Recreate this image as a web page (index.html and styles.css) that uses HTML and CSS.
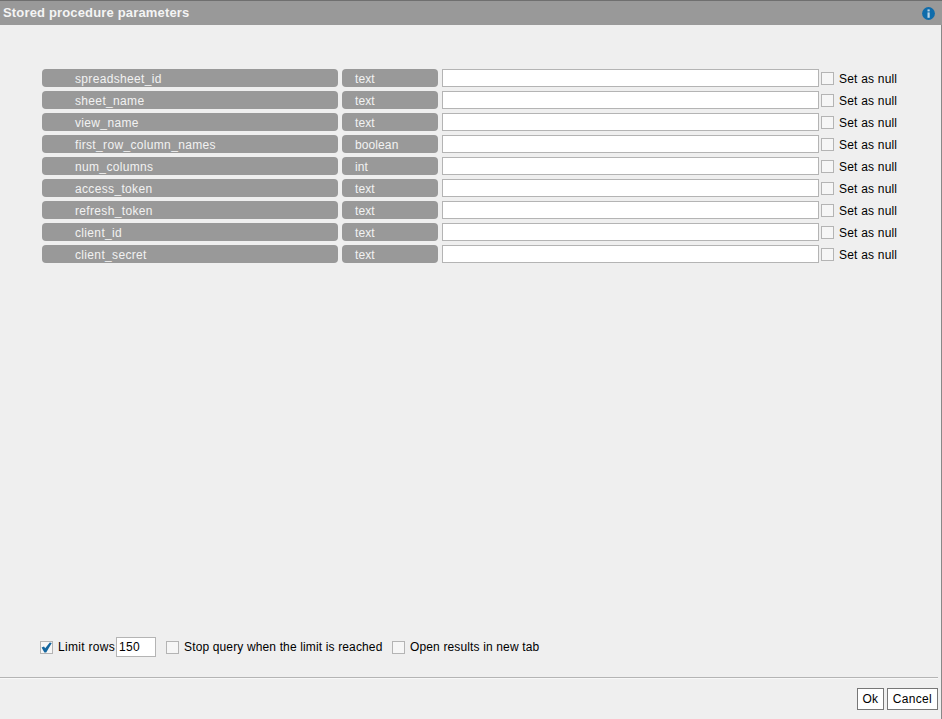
FILE: index.html
```html
<!DOCTYPE html>
<html lang="en">
<head>
<meta charset="utf-8">
<title>Stored procedure parameters</title>
<link rel="stylesheet" href="styles.css">
</head>
<body>
<div class="dialog">
  <div class="titlebar">
    <span class="title">Stored procedure parameters</span>
    <svg class="info" width="13" height="13" viewBox="0 0 13 13"><circle cx="6.5" cy="6.5" r="6.4" fill="#0f6cab"/><rect x="5.5" y="5.4" width="2.2" height="5.4" fill="#b9d5e8"/><rect x="5.5" y="2.4" width="2.2" height="2" fill="#b9d5e8"/></svg>
  </div>
  <div class="params">
    <div class="row"><div class="pill name">spreadsheet_id</div><div class="pill type">text</div><input class="value" type="text"><span class="box"></span><span class="null">Set as null</span></div>
    <div class="row"><div class="pill name">sheet_name</div><div class="pill type">text</div><input class="value" type="text"><span class="box"></span><span class="null">Set as null</span></div>
    <div class="row"><div class="pill name">view_name</div><div class="pill type">text</div><input class="value" type="text"><span class="box"></span><span class="null">Set as null</span></div>
    <div class="row"><div class="pill name">first_row_column_names</div><div class="pill type">boolean</div><input class="value" type="text"><span class="box"></span><span class="null">Set as null</span></div>
    <div class="row"><div class="pill name">num_columns</div><div class="pill type">int</div><input class="value" type="text"><span class="box"></span><span class="null">Set as null</span></div>
    <div class="row"><div class="pill name">access_token</div><div class="pill type">text</div><input class="value" type="text"><span class="box"></span><span class="null">Set as null</span></div>
    <div class="row"><div class="pill name">refresh_token</div><div class="pill type">text</div><input class="value" type="text"><span class="box"></span><span class="null">Set as null</span></div>
    <div class="row"><div class="pill name">client_id</div><div class="pill type">text</div><input class="value" type="text"><span class="box"></span><span class="null">Set as null</span></div>
    <div class="row"><div class="pill name">client_secret</div><div class="pill type">text</div><input class="value" type="text"><span class="box"></span><span class="null">Set as null</span></div>
  </div>
  <div class="options">
    <span class="box checked"><svg width="11" height="11" viewBox="0 0 11 11"><path d="M.6 5.6 L3 4.6 L4.2 6.2 L8.8 .4 L10.8 1 L5.2 10.4 L3.4 10.4 Z" fill="#14669f"/></svg></span>
    <span class="opt limit">Limit rows</span>
    <input class="limit-input" type="text" value="150">
    <span class="box stop"></span>
    <span class="opt">Stop query when the limit is reached</span>
    <span class="box open"></span>
    <span class="opt">Open results in new tab</span>
  </div>
  <div class="footer">
    <button class="btn btn-ok" type="button">Ok</button>
    <button class="btn" type="button">Cancel</button>
  </div>
</div>
</body>
</html>
```
FILE: styles.css
```css
* { box-sizing: border-box; }
html, body { margin: 0; padding: 0; }
body { font-family: "Liberation Sans", Arial, sans-serif; font-size: 12px; color: #000; background: #efefef; }
.dialog {
  width: 942px; height: 719px; display: flex; flex-direction: column;
  background: #efefef; border-right: 1px solid #888;
}
.titlebar {
  height: 25px; flex: none; margin-right: -1px; background: #999; border-top: 1px solid #6f6f6f;
  display: flex; align-items: center; justify-content: space-between; padding: 0 7px 0 3px;
}
.title { color: #f4f4f4; font-weight: bold; font-size: 13px; letter-spacing: .16px; padding-bottom: 2px; }
.params { padding: 44px 0 0 42px; flex: 1; display: flex; flex-direction: column; gap: 4px; }
.row { display: flex; align-items: center; height: 18px; }
.pill {
  height: 18px; line-height: 20px; background: #999; color: #f2f2f2; border-radius: 4px;
  flex: none;
}
.name { width: 296px; padding-left: 33px; margin-right: 4px; letter-spacing: .34px; }
.type { width: 96px; padding-left: 13px; margin-right: 4px; letter-spacing: .1px; }
.value {
  width: 377px; height: 18px; flex: none; background: #fff; border: 1px solid #b4b4b4;
  padding: 0 2px; margin: 0 2px 0 0; outline: none; border-radius: 0;
}
.box {
  width: 13px; height: 13px; flex: none; display: inline-flex; align-items: center; justify-content: center;
  background: #f6f6f6; border: 1px solid #b4b4b4;
}
.null { margin-left: 5px; letter-spacing: .2px; line-height: 20px; align-self: flex-start; }
.options { display: flex; align-items: center; height: 20px; padding-left: 40px; flex: none; margin-bottom: 20px; }
.opt { letter-spacing: .14px; line-height: 22px; }
.checked { margin-right: 5px; }
.limit { margin-right: 1px; letter-spacing: .3px; }
.limit-input {
  width: 40px; height: 20px; background: #fff; border: 1px solid #b4b4b4; padding: 0 2px;
  font: 12px "Liberation Sans", Arial, sans-serif; letter-spacing: .3px; margin-right: 10px; border-radius: 0; outline: none;
}
.stop { margin-right: 5px; }
.open { margin: 0 5.5px 0 9px; }
.footer {
  height: 42px; flex: none; margin-right: 3px; border-top: 1px solid #b4b4b4; box-shadow: inset 0 1px 0 #f8f8f8;
  display: flex; justify-content: flex-end; gap: 3px; padding-top: 10px;
}
.btn {
  height: 22px; background: #fff; border: 1px solid #777; border-radius: 0; padding: 0 5px;
  font: 12px "Liberation Sans", Arial, sans-serif; color: #000; letter-spacing: .3px;
}
.btn-ok { padding: 0 4.5px; }
```
